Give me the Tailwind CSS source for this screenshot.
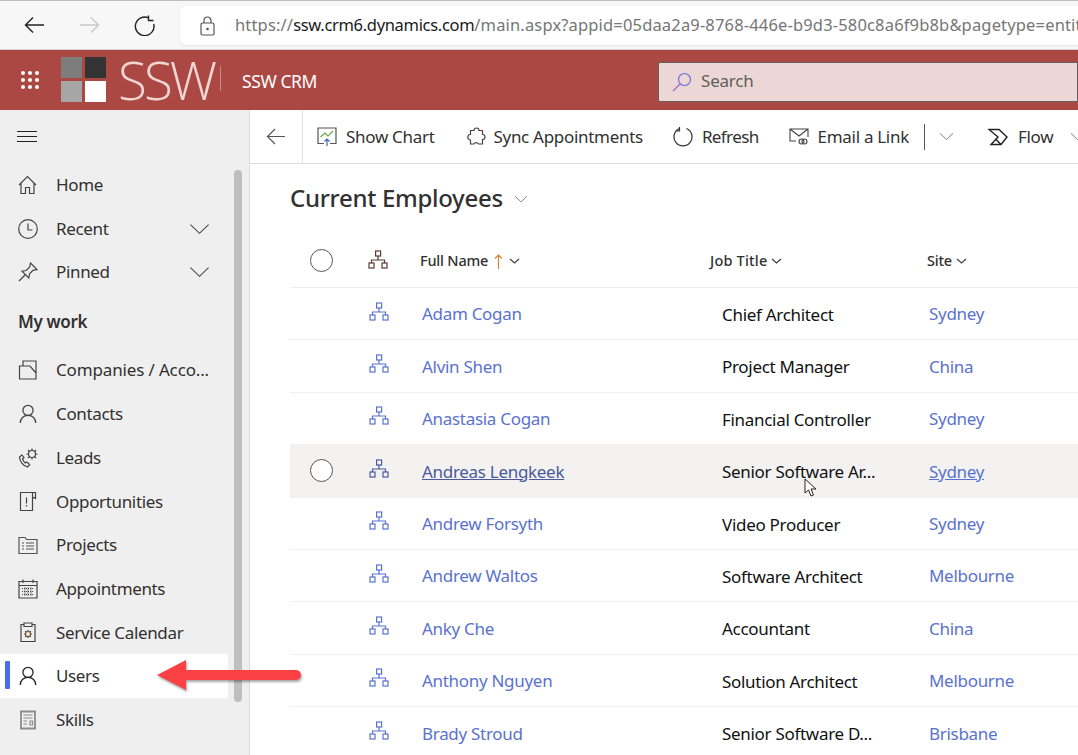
<!DOCTYPE html>
<html lang="en">
<head>
  <meta charset="UTF-8" />
  <title>SSW CRM</title>
  <script src="https://cdn.jsdelivr.net/npm/@tailwindcss/browser@4"></script>
</head>
<body class="w-[1078px] h-[755px] overflow-hidden relative bg-white font-['Noto_Sans','Open_Sans',sans-serif] text-[#323130]">

<svg class="hidden">
  <symbol id="hier" viewBox="0 0 20 20" fill="none" stroke="currentColor" stroke-width="1.2">
    <rect x="7.6" y="1" width="5" height="5" /><rect x="1" y="13" width="5" height="5" /><rect x="14" y="13" width="5" height="5" />
    <path d="M10 6v4M3.5 13v-3h13v3" />
  </symbol>
  <symbol id="chev" viewBox="0 0 22 12" fill="none" stroke="currentColor" stroke-width="1.1">
    <path d="M1.5 1.5 11 10.5 20.5 1.5" />
  </symbol>
  <symbol id="chev-sm" viewBox="0 0 22 12" fill="none" stroke="currentColor" stroke-width="2.6">
    <path d="M2 2 11 10 20 2" />
  </symbol>
  <symbol id="person" viewBox="0 0 20 22" fill="none" stroke="currentColor" stroke-width="1.4">
    <circle cx="10" cy="7" r="5.6" /><path d="M1.5 21c0-5 3.500-8.400 8.500-8.400s8.500 3.400 8.500 8.400" />
  </symbol>
</svg>

<!-- browser bar -->
<div class="h-[50px] bg-[#f7f7f7] border-t border-t-[#b5c0c6] border-b border-b-[#d0d0d0] flex items-center">
  <div class="w-[180px] flex items-center shrink-0 pl-6 gap-[34px]">
    <svg class="w-[21px] h-[18px] text-[#222]" viewBox="0 0 21 18" fill="none" stroke="currentColor" stroke-width="1.4"><path d="M20 9H1.500M9 1.500 1.500 9 9 16.500" /></svg>
    <svg class="w-[21px] h-[18px] text-[#c9c9c9]" viewBox="0 0 21 18" fill="none" stroke="currentColor" stroke-width="1.4"><path d="M1 9h18.500M12 1.500 19.500 9 12 16.500" /></svg>
    <svg class="w-[21px] h-[21px] text-[#222]" viewBox="0 0 21 21" fill="none" stroke="currentColor" stroke-width="1.4"><path d="M14.500 2.800A9.300 9.300 0 1 0 19.700 9M14.500 0.500v5h5" /></svg>
  </div>
  <div class="flex-1 h-[39px] mt-[1px] bg-white rounded-l-[6px] flex items-center pl-[20px] overflow-hidden shadow-[0_1px_2px_rgba(0,0,0,0.08)]">
    <svg class="w-[15px] h-[20px] text-[#555] shrink-0" viewBox="0 0 15 20" fill="none" stroke="currentColor" stroke-width="1.2"><rect x="1" y="7" width="13" height="12" rx="1.500" /><path d="M4 7V4.500a3.500 3.500 0 0 1 7 0V7" /><circle cx="7.500" cy="13" r="0.700" fill="currentColor" /></svg>
    <span class="ml-[20px] text-[16.5px] whitespace-nowrap text-[#767676] tracking-[0.16px]">https://<span class="text-[#1a1a1a] tracking-[-0.32px]">ssw.crm6.dynamics.com</span>/main.aspx?appid=05daa2a9-8768-446e-b9d3-580c8a6f9b8b&amp;pagetype=entitylist</span>
  </div>
</div>

<!-- app header -->
<header class="h-[60px] bg-[#ab4844] flex items-center text-white">
  <div class="w-[59px] shrink-0 flex justify-center">
    <div class="grid grid-cols-3 gap-[3px]">
      <i class="size-[4px] rounded-full bg-white"></i><i class="size-[4px] rounded-full bg-white"></i><i class="size-[4px] rounded-full bg-white"></i>
      <i class="size-[4px] rounded-full bg-white"></i><i class="size-[4px] rounded-full bg-white"></i><i class="size-[4px] rounded-full bg-white"></i>
      <i class="size-[4px] rounded-full bg-white"></i><i class="size-[4px] rounded-full bg-white"></i><i class="size-[4px] rounded-full bg-white"></i>
    </div>
  </div>
  <div class="ml-[2px] grid grid-cols-[21px_21px] gap-[3px] mt-[-1px] shrink-0">
    <i class="h-[21px] bg-[#7d7d7d]"></i><i class="h-[21px] bg-[#333]"></i>
    <i class="h-[21px] bg-[#a6a6a6]"></i><i class="h-[21px] bg-white"></i>
  </div>
  <span class="ml-[12px] w-[102px] shrink-0 text-[53px] leading-none font-['Open_Sans',sans-serif] font-light tracking-[-3px] text-[#f0d5d3] mt-[-1px]">SSW</span>
  <i class="w-px h-[25px] shrink-0 bg-[#c98a87] mt-[-3px]"></i>
  <span class="ml-[21px] text-[17.5px] tracking-[-0.4px] mt-[3px] w-[77px] shrink-0 whitespace-nowrap">SSW CRM</span>
  <div class="ml-[339px] flex-1 h-[40px] self-end mb-[8px] bg-[#ecd7d6] border border-[#5f5f5f] rounded-l-[2px] flex items-center pl-[13px] text-[#605e5c]">
    <svg class="w-[20px] h-[20px]" viewBox="0 0 20 20" fill="none" stroke-width="1.2"><circle cx="12.500" cy="7.500" r="6" stroke="#6f75d8" /><path d="M8 12 1 19" stroke="#a06cc0" /></svg>
    <span class="ml-[9px] pb-[3px] text-[17px] tracking-[-0.2px]">Search</span>
  </div>
</header>

<div class="flex h-[645px]">
  <!-- sidebar -->
  <aside class="relative w-[250px] shrink-0 bg-[#efefef] border-r border-[#dcdcdc] overflow-hidden">
    <div class="h-[53px] pl-[17px] flex items-center">
      <div class="w-[20px] flex flex-col gap-[4px]"><i class="h-px bg-[#222]"></i><i class="h-px bg-[#222]"></i><i class="h-px bg-[#222]"></i></div>
    </div>
    <nav class="w-[228px] text-[17px] tracking-[-0.35px]">
      <a class="h-[43.700px] flex items-center pl-[18px] gap-[19px]">
        <svg class="w-[19px] h-[20px] shrink-0" viewBox="0 0 19 20" fill="none" stroke="#444" stroke-width="1.2"><path d="M1 10 9.500 1.500 18 10M3 8.500V18.500h4.500v-6h4v6H16V8.500" /></svg>Home
      </a>
      <a class="h-[43.700px] flex items-center pl-[18px] gap-[18px]">
        <svg class="w-[20px] h-[20px] shrink-0" viewBox="0 0 20 20" fill="none" stroke="#444" stroke-width="1.2"><circle cx="10" cy="10" r="9.300" /><path d="M10 4.500V11h4.500" /></svg>Recent
        <svg class="w-[21px] h-[12px] ml-auto mr-[18px] text-[#444]"><use href="#chev" /></svg>
      </a>
      <a class="h-[43.700px] flex items-center pl-[18px] gap-[18px]">
        <svg class="w-[20px] h-[20px] shrink-0" viewBox="0 0 20 20" fill="none" stroke="#444" stroke-width="1.2"><path d="M12.500 1 19 7.500l-4 .8-3.500 3.500-.7 4.200L4 9.200l4.200-.7L11.700 5zM7 13 1 19" /></svg>Pinned
        <svg class="w-[21px] h-[12px] ml-auto mr-[18px] text-[#444]"><use href="#chev" /></svg>
      </a>
      <div class="h-[54.300px] pl-[18px] pt-[2px] flex items-center font-semibold text-[#323130]">My work</div>
      <a class="h-[43.700px] flex items-center pl-[18px] gap-[18px]">
        <svg class="w-[20px] h-[20px] shrink-0" viewBox="0 0 20 20" fill="none" stroke="#444" stroke-width="1.2"><path d="M5 6V1h13v18M1.500 6H12l6 7v6H1.500z" /></svg><span class="whitespace-nowrap tracking-[-0.15px]">Companies / Acco...</span>
      </a>
      <a class="h-[43.700px] flex items-center pl-[18px] gap-[18px]"><svg class="w-[20px] h-[20px] shrink-0 text-[#444]"><use href="#person" /></svg>Contacts</a>
      <a class="h-[43.700px] flex items-center pl-[18px] gap-[18px]">
        <svg class="w-[20px] h-[20px] shrink-0" viewBox="0 0 20 20" fill="none" stroke="#444" stroke-width="1.200"><path d="M4 7 1.500 9c0 4 3.500 9 8 10l2.200-2.500-3-2.500-1.500 1c-1.200-1-2.200-2.500-2.700-4.500L6 9.500z" /><circle cx="14" cy="6" r="3.500" /><path d="M14 .5v2M14 9.500v2M8.500 6h2M17.500 6h2M10 2l1.500 1.500M18 2l-1.500 1.500M10 10l1.500-1.500M18 10l-1.500-1.500" /></svg>Leads
      </a>
      <a class="h-[43.700px] flex items-center pl-[18px] gap-[18px]">
        <svg class="w-[20px] h-[20px] shrink-0" viewBox="0 0 20 20" fill="none" stroke="#444" stroke-width="1.200"><path d="M2.500 1.500h12v18h-12zM14.500 1.500h3v6l-1.500-1-1.500 1" /><path d="M8.500 6.500v6M8.500 14v1.500" /></svg>Opportunities
      </a>
      <a class="h-[43.700px] flex items-center pl-[18px] gap-[18px]">
        <svg class="w-[20px] h-[20px] shrink-0" viewBox="0 0 20 20" fill="none" stroke="#555" stroke-width="1.200"><path d="M1 2.500h6l1.500 2H19v14H1z" /><path d="M4 8h2M8 8h8M4 11h2M8 11h8M4 14h2M8 14h8" /></svg>Projects
      </a>
      <a class="h-[43.700px] flex items-center pl-[18px] gap-[18px]">
        <svg class="w-[20px] h-[20px] shrink-0" viewBox="0 0 20 20" fill="none" stroke="#444" stroke-width="1.200"><path d="M1 2.500h18v16.500H1zM1 6.500h18M5 .5v3.500M15 .5v3.500" /><path d="M4 9.500h12M4 12.500h12M4 15.500h12M7 8.500v8.500M10 8.500v8.500M13 8.500v8.500" stroke-dasharray="1 1" /></svg>Appointments
      </a>
      <a class="h-[43.700px] flex items-center pl-[18px] gap-[18px]">
        <svg class="w-[20px] h-[20px] shrink-0" viewBox="0 0 20 20" fill="none" stroke="#444" stroke-width="1.200"><path d="M6 2.500H3v17h14v-17h-3M6 1h8v3.500H6z" /><circle cx="10" cy="12" r="2.500" stroke="#8a5a2b" /><path d="M10 8v1.500M10 14.500V16M6 12h1.500M12.500 12H14M7.200 9.200l1 1M12.800 9.200l-1 1M7.200 14.800l1-1M12.800 14.800l-1-1" /></svg>Service Calendar
      </a>
      <a class="relative h-[43.700px] flex items-center pl-[18px] gap-[18px] bg-white">
        <i class="absolute left-[5px] top-[7px] w-[5px] h-[28px] rounded-[1px] bg-[#4f6bed]"></i>
        <svg class="w-[20px] h-[20px] shrink-0 text-[#222]"><use href="#person" /></svg>Users
      </a>
      <a class="h-[43.700px] flex items-center pl-[18px] gap-[18px]">
        <svg class="w-[20px] h-[20px] shrink-0" viewBox="0 0 20 20" fill="#efefef" stroke="#8c8c8c" stroke-width="1.800"><path d="M3 1.500h14v17H3z" /><path d="M5.500 5h9M5.500 8h9M5.500 11h3.500M5.500 14h3.500M12 11h2.500v4H12z" stroke-width="1.200" /></svg>Skills
      </a>
    </nav>
    <div class="absolute left-[234px] top-[60px] w-[8px] h-[532px] rounded-full bg-[#bfbfbf]"></div>
  </aside>

  <main class="flex-1 min-w-0 overflow-hidden">
    <!-- command bar -->
    <div class="h-[54px] border-b border-[#dcdcdc] flex items-center whitespace-nowrap text-[17px] tracking-[-0.3px] text-[#323130]">
      <div class="w-[53px] h-full shrink-0 border-r border-[#e3e3e3] flex items-center justify-center">
        <svg class="w-[20px] h-[17px] text-[#555]" viewBox="0 0 20 17" fill="none" stroke="currentColor" stroke-width="1.200"><path d="M19 8.500H1.500M9 1 1.500 8.500 9 16" /></svg>
      </div>
      <svg class="ml-[14px] w-[20px] h-[20px] shrink-0" viewBox="0 0 20 20" fill="none" stroke-width="1.200"><path d="M7 16.500H1V1h18v15.500h-6" stroke="#555" /><path d="M3.500 10 8 6l3 3 5-5" stroke="#6aa84f" /><path d="M10 19V12M7.500 14.500 10 12l2.500 2.500" stroke="#3d6cb9" /></svg>
      <span class="ml-[9px]">Show Chart</span>
      <svg class="ml-[32px] w-[19px] h-[20px] shrink-0" viewBox="0 0 19 20" fill="none" stroke="#444" stroke-width="1.200"><path d="M7 3.500a2.500 2.500 0 0 1 5 0h3.500v4a2.500 2.500 0 0 1 0 5v4.500H11.500a2.500 2.500 0 0 0-4.500 0H3.500v-4a2.500 2.500 0 0 1 0-5.500V3.500z" /></svg>
      <span class="ml-[8px]">Sync Appointments</span>
      <svg class="ml-[30px] w-[20px] h-[21px] shrink-0" viewBox="0 0 20 21" fill="none" stroke="#333" stroke-width="1.200"><path d="M13.500 2.500a9 9 0 1 1-7 0M6.500 1v4H2.500" /></svg>
      <span class="ml-[9px] tracking-[-0.6px]">Refresh</span>
      <svg class="ml-[30px] w-[20px] h-[19px] shrink-0" viewBox="0 0 20 19" fill="none" stroke="#444" stroke-width="1.100"><path d="M7 14H1V2h18v8M1 2l9 7 9-7" /><circle cx="12.500" cy="14.500" r="2.500" /><circle cx="15.500" cy="14.500" r="2.500" /></svg>
      <span class="ml-[9px] tracking-[-0.3px]">Email a Link</span>
      <i class="ml-[15px] w-px h-[26px] shrink-0 bg-[#555]"></i>
      <svg class="ml-[14px] w-[15px] h-[9px] shrink-0 text-[#555]"><use href="#chev" /></svg>
      <svg class="ml-[34px] w-[20px] h-[18px] shrink-0" viewBox="0 0 20 18" fill="none" stroke="#222" stroke-width="1.400"><path d="M1 1.500h10l8 7.500-6 7.500H3l7-7.500z" /><path d="M13 16.500 7.500 11" /></svg>
      <span class="ml-[10px]">Flow</span>
      <svg class="ml-[17px] w-[15px] h-[9px] shrink-0 text-[#555]"><use href="#chev" /></svg>
    </div>

    <div class="pl-[40px]">
      <div class="h-[69px] pb-[2px] flex items-center text-[24px] font-medium tracking-[-0.3px] text-[#323130]">
        Current Employees
        <svg class="ml-[11px] mt-[2px] w-[14px] h-[8px] text-[#555]"><use href="#chev" /></svg>
      </div>
      <div class="h-[55px] flex items-center border-b border-[#efefef] text-[14.500px] font-medium tracking-[-0.2px] text-[#323130]">
        <div class="w-[62px] pl-[20px]"><div class="size-[23px] rounded-full border border-[#555] bg-white"></div></div>
        <div class="w-[68px] pl-[16px]"><svg class="size-[20px] text-[#5b3a2e]"><use href="#hier" /></svg></div>
        <div class="w-[290px] pt-[2px] flex items-center">Full Name
          <svg class="ml-[6px] w-[9px] h-[15px]" viewBox="0 0 9 15" fill="none" stroke="#c8832a" stroke-width="1.100"><path d="M4.500 15V1M1 4.500 4.500 1 8 4.500" /></svg>
          <svg class="ml-[6px] w-[11px] h-[6px] text-[#444]"><use href="#chev-sm" /></svg>
        </div>
        <div class="w-[217px] pt-[2px] flex items-center tracking-[0.2px]">Job Title<svg class="ml-[4px] w-[11px] h-[6px] text-[#444]"><use href="#chev-sm" /></svg></div>
        <div class="pt-[2px] flex items-center">Site<svg class="ml-[4px] w-[11px] h-[6px] text-[#444]"><use href="#chev-sm" /></svg></div>
      </div>

      <div class="text-[17px] tracking-[-0.3px]">
        <div class="h-[52.400px] flex items-center border-b border-[#f1f1f1]">
          <div class="w-[62px]"></div><div class="w-[70px] pl-[17px] pb-[4px]"><svg class="size-[20px] text-[#5a72cf]"><use href="#hier" /></svg></div>
          <a class="w-[300px] pt-[1px] text-[#5a72cf]">Adam Cogan</a><div class="w-[207px] pt-[2px] text-[#111]">Chief Architect</div><a class="pt-[1px] text-[#5a72cf]">Sydney</a>
        </div>
        <div class="h-[52.400px] flex items-center border-b border-[#f1f1f1]">
          <div class="w-[62px]"></div><div class="w-[70px] pl-[17px] pb-[4px]"><svg class="size-[20px] text-[#5a72cf]"><use href="#hier" /></svg></div>
          <a class="w-[300px] pt-[1px] text-[#5a72cf]">Alvin Shen</a><div class="w-[207px] pt-[2px] text-[#111]">Project Manager</div><a class="pt-[1px] text-[#5a72cf]">China</a>
        </div>
        <div class="h-[52.400px] flex items-center border-b border-[#f1f1f1]">
          <div class="w-[62px]"></div><div class="w-[70px] pl-[17px] pb-[4px]"><svg class="size-[20px] text-[#5a72cf]"><use href="#hier" /></svg></div>
          <a class="w-[300px] pt-[1px] text-[#5a72cf]">Anastasia Cogan</a><div class="w-[207px] pt-[2px] text-[#111]">Financial Controller</div><a class="pt-[1px] text-[#5a72cf]">Sydney</a>
        </div>
        <div class="h-[52.400px] flex items-center border-b border-[#f1f1f1] bg-[#f3f2f1]">
          <div class="w-[62px] pl-[20px]"><div class="size-[23px] rounded-full border border-[#555] bg-white"></div></div><div class="w-[70px] pl-[17px] pb-[4px]"><svg class="size-[20px] text-[#4a5a9c]"><use href="#hier" /></svg></div>
          <a class="w-[300px] pt-[1px] text-[#4a5a9c] underline">Andreas Lengkeek</a><div class="w-[207px] pt-[2px] text-[#111]">Senior Software Ar...</div><a class="pt-[1px] text-[#5a72cf] underline">Sydney</a>
        </div>
        <div class="h-[52.400px] flex items-center border-b border-[#f1f1f1]">
          <div class="w-[62px]"></div><div class="w-[70px] pl-[17px] pb-[4px]"><svg class="size-[20px] text-[#5a72cf]"><use href="#hier" /></svg></div>
          <a class="w-[300px] pt-[1px] text-[#5a72cf]">Andrew Forsyth</a><div class="w-[207px] pt-[2px] text-[#111]">Video Producer</div><a class="pt-[1px] text-[#5a72cf]">Sydney</a>
        </div>
        <div class="h-[52.400px] flex items-center border-b border-[#f1f1f1]">
          <div class="w-[62px]"></div><div class="w-[70px] pl-[17px] pb-[4px]"><svg class="size-[20px] text-[#5a72cf]"><use href="#hier" /></svg></div>
          <a class="w-[300px] pt-[1px] text-[#5a72cf]">Andrew Waltos</a><div class="w-[207px] pt-[2px] text-[#111]">Software Architect</div><a class="pt-[1px] text-[#5a72cf]">Melbourne</a>
        </div>
        <div class="h-[52.400px] flex items-center border-b border-[#f1f1f1]">
          <div class="w-[62px]"></div><div class="w-[70px] pl-[17px] pb-[4px]"><svg class="size-[20px] text-[#5a72cf]"><use href="#hier" /></svg></div>
          <a class="w-[300px] pt-[1px] text-[#5a72cf]">Anky Che</a><div class="w-[207px] pt-[2px] text-[#111]">Accountant</div><a class="pt-[1px] text-[#5a72cf]">China</a>
        </div>
        <div class="h-[52.400px] flex items-center border-b border-[#f1f1f1]">
          <div class="w-[62px]"></div><div class="w-[70px] pl-[17px] pb-[4px]"><svg class="size-[20px] text-[#5a72cf]"><use href="#hier" /></svg></div>
          <a class="w-[300px] pt-[1px] text-[#5a72cf]">Anthony Nguyen</a><div class="w-[207px] pt-[2px] text-[#111]">Solution Architect</div><a class="pt-[1px] text-[#5a72cf]">Melbourne</a>
        </div>
        <div class="h-[52.400px] flex items-center border-b border-[#f1f1f1]">
          <div class="w-[62px]"></div><div class="w-[70px] pl-[17px] pb-[4px]"><svg class="size-[20px] text-[#5a72cf]"><use href="#hier" /></svg></div>
          <a class="w-[300px] pt-[1px] text-[#5a72cf]">Brady Stroud</a><div class="w-[207px] pt-[2px] text-[#111]">Senior Software D...</div><a class="pt-[1px] text-[#5a72cf]">Brisbane</a>
        </div>
      </div>
    </div>
  </main>
</div>

<!-- red annotation arrow -->
<svg class="absolute left-[150px] top-[654px] w-[156px] h-[44px]" viewBox="0 0 156 44" fill="#fb4143" style="filter:drop-shadow(1px 2px 1px rgba(0,0,0,0.35))">
  <path d="M7 21 36 6v10h110a5 5 0 0 1 0 10H36v10z" />
</svg>
<!-- mouse cursor -->
<svg class="absolute left-[804px] top-[478px] w-[14px] h-[20px]" viewBox="0 0 14 20" fill="#fff" stroke="#222" stroke-width="1"><path d="M1 1v14l3.500-3 2.500 6 2.500-1-2.500-6h5z" /></svg>
</body>
</html>
